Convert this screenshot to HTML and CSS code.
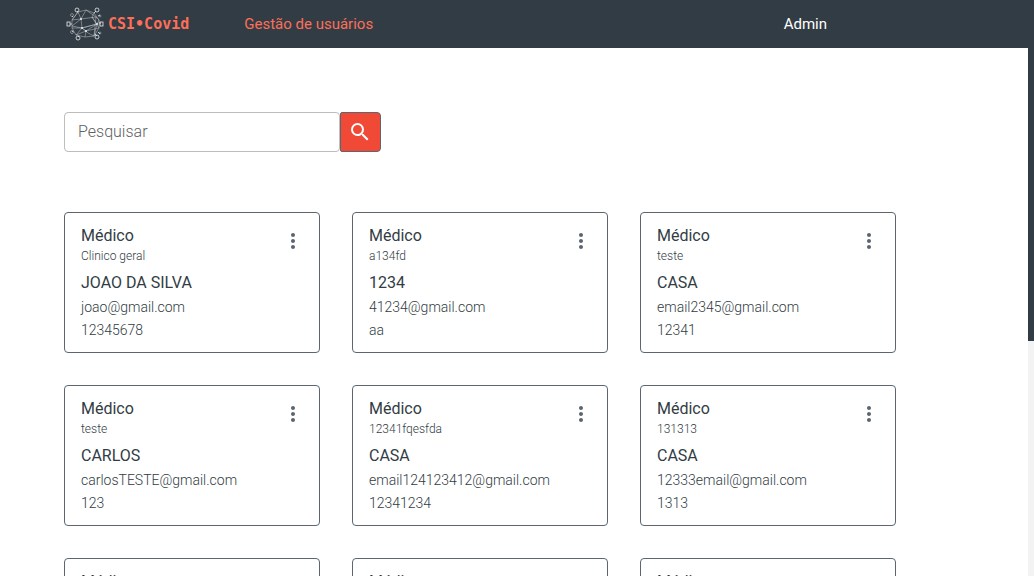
FILE: index.html
```html
<!DOCTYPE html>
<html lang="pt-BR">
<head>
<meta charset="utf-8">
<meta name="viewport" content="width=device-width, initial-scale=1">
<title>CSI•Covid</title>
<link rel="stylesheet" href="styles.css">
</head>
<body>
<svg class="defs" aria-hidden="true">
  <symbol id="more" viewBox="0 0 24 24"><path d="M12 8c1.100 0 2-.9 2-2s-.9-2-2-2-2 .9-2 2 .9 2 2 2zm0 2c-1.100 0-2 .9-2 2s.9 2 2 2 2-.9 2-2-.9-2-2-2zm0 6c-1.100 0-2 .9-2 2s.9 2 2 2 2-.9 2-2-.9-2-2-2z"/></symbol>
</svg>
<header class="topbar">
  <a class="brand" href="#">
    <svg class="brand-mark" viewBox="0 0 38 36" aria-hidden="true">
      <g class="mesh">
        <path d="M12 6 20 4 28 7 33 14 33 22 28 30 19 31 10 29 6 22 6 14Z"/>
        <path d="M12 6 15 13 30 11 20 4 15 13 6 20 16 22 31 18 26 11 28 7M6 14 15 13 16 22 10 29 20 25 33 22 26 11M16 22 22 27 28 30 31 18 20 25 19 31M20 25 16 22 31 18 33 14 30 11 28 30M6 22 16 22M12 6 6 14"/>
      </g>
      <g class="spikes">
        <path d="M12 6 11 5M28 7 30 5M33 17H35M29 28 31 30M13 30 12 31M6 18H4M7 11 6 10M7 25 6 26M32 26 34 28M32 10 34 9"/>
        <circle cx="11" cy="4" r="2"/><circle cx="31" cy="4" r="2"/><rect x="34" y="16" width="3" height="4"/><circle cx="31" cy="31" r="2"/><circle cx="12" cy="32" r="2"/><rect x="1" y="16" width="3" height="4"/>
      </g>
      <g class="buds">
        <circle cx="6" cy="9" r="1.500"/><circle cx="6" cy="26" r="1.500"/><circle cx="34" cy="10" r="1"/><circle cx="34" cy="27" r="1"/>
      </g>
      <g class="nodes"><circle cx="15" cy="13" r="1"/><circle cx="16" cy="22" r="1"/><circle cx="31" cy="18" r="1"/><circle cx="20" cy="25" r="1"/></g>
    </svg>
    <span class="brand-name">CSI•Covid</span>
  </a>
  <nav class="nav"><a class="nav-link" href="#">Gestão de usuários</a></nav>
  <a class="account" href="#">Admin</a>
</header>
<main class="content">
  <form class="search" role="search">
    <input class="search-input" type="text" placeholder="Pesquisar" aria-label="Pesquisar">
    <button class="search-button" type="button" aria-label="Pesquisar">
      <svg class="icon" viewBox="0 0 24 24" aria-hidden="true"><path d="M15.500 14h-.79l-.28-.27A6.471 6.471 0 0 0 16 9.500 6.500 6.500 0 1 0 9.500 16c1.610 0 3.090-.59 4.230-1.570l.27.28v.79l5 4.990L20.490 19l-4.990-5zm-6 0C7.010 14 5 11.990 5 9.500S7.010 5 9.500 5 14 7.010 14 9.500 11.990 14 9.500 14z"/></svg>
    </button>
  </form>
  <section class="cards">
    <article class="card">
      <div class="card-head"><div><h2 class="title">Médico</h2><p class="role">Clinico geral</p></div><button class="menu" type="button" aria-label="Opções"><svg class="icon"><use href="#more"/></svg></button></div>
      <h3 class="name">JOAO DA SILVA</h3><p class="detail">joao@gmail.com</p><p class="detail">12345678</p>
    </article>
    <article class="card">
      <div class="card-head"><div><h2 class="title">Médico</h2><p class="role">a134fd</p></div><button class="menu" type="button" aria-label="Opções"><svg class="icon"><use href="#more"/></svg></button></div>
      <h3 class="name">1234</h3><p class="detail">41234@gmail.com</p><p class="detail">aa</p>
    </article>
    <article class="card">
      <div class="card-head"><div><h2 class="title">Médico</h2><p class="role">teste</p></div><button class="menu" type="button" aria-label="Opções"><svg class="icon"><use href="#more"/></svg></button></div>
      <h3 class="name">CASA</h3><p class="detail">email2345@gmail.com</p><p class="detail">12341</p>
    </article>
    <article class="card">
      <div class="card-head"><div><h2 class="title">Médico</h2><p class="role">teste</p></div><button class="menu" type="button" aria-label="Opções"><svg class="icon"><use href="#more"/></svg></button></div>
      <h3 class="name">CARLOS</h3><p class="detail">carlosTESTE@gmail.com</p><p class="detail">123</p>
    </article>
    <article class="card">
      <div class="card-head"><div><h2 class="title">Médico</h2><p class="role">12341fqesfda</p></div><button class="menu" type="button" aria-label="Opções"><svg class="icon"><use href="#more"/></svg></button></div>
      <h3 class="name">CASA</h3><p class="detail">email124123412@gmail.com</p><p class="detail">12341234</p>
    </article>
    <article class="card">
      <div class="card-head"><div><h2 class="title">Médico</h2><p class="role">131313</p></div><button class="menu" type="button" aria-label="Opções"><svg class="icon"><use href="#more"/></svg></button></div>
      <h3 class="name">CASA</h3><p class="detail">12333email@gmail.com</p><p class="detail">1313</p>
    </article>
    <article class="card"><h2 class="title">Médico</h2></article>
    <article class="card"><h2 class="title">Médico</h2></article>
    <article class="card"><h2 class="title">Médico</h2></article>
  </section>
</main>
<div class="scrollbar" aria-hidden="true"><div class="scrollbar-thumb"></div></div>
</body>
</html>
```
FILE: styles.css
```css
* { box-sizing: border-box; margin: 0; padding: 0; }
body {
  height: 100vh;
  overflow: hidden;
  background: #fff;
  color: #323c44;
  font: 400 16px/24px Roboto, "Liberation Sans", sans-serif;
}
.defs { display: none; }
.topbar {
  display: flex;
  align-items: center;
  height: 48px;
  padding-left: 66px;
  padding-right: 207px;
  background: #323c44;
}
.topbar a { text-decoration: none; }
.brand { display: flex; align-items: center; gap: 4px; color: #fd6f59; }
.brand-mark { width: 38px; height: 36px; fill: none; stroke: #e8ebed; }
.mesh { stroke-width: .5; opacity: .8; }
.spikes { stroke-width: .8; }
.buds { stroke-width: .6; opacity: .7; }
.nodes { fill: #e8ebed; stroke: none; }
.brand-name { font: 700 15px/24px "DejaVu Sans Mono", monospace; }
.nav { margin-left: 55px; font-size: 15px; }
.nav-link { color: #fd6f59; }
.account { margin-left: auto; color: #fff; font-size: 15px; }
.content { padding: 64px 138px 0 64px; }
.search { display: flex; width: 317px; height: 40px; }
.search-input {
  flex: 1;
  min-width: 0;
  padding: 0 13px;
  border: 1px solid #bdbdbd;
  border-radius: 4px;
  background: #fff;
  color: #323c44;
  font: 300 16px/24px Roboto, sans-serif;
}
.search-input::placeholder { color: #616161; opacity: 1; }
.search-button {
  display: grid;
  place-items: center start;
  width: 41px;
  padding-left: 7px;
  border: 1px solid #5b6670;
  border-radius: 2px 4px 4px 2px;
  background: #f04936;
}
.icon { display: block; width: 24px; height: 24px; fill: currentColor; }
.search-button .icon { color: #fff; }
.cards {
  display: grid;
  grid-template-columns: repeat(3, 1fr);
  gap: 32px;
  margin-top: 60px;
}
.card {
  padding: 11px 16px 9px;
  min-height: 141px;
  border: 1px solid #5b6670;
  border-radius: 4px;
}
.card-head { display: flex; justify-content: space-between; align-items: center; margin-bottom: 7px; }
.title, .name { font-size: 16px; line-height: 24px; font-weight: 400; }
.name { margin-bottom: 1px; }
.role { font-size: 12px; line-height: 16px; font-weight: 300; }
.detail { font-size: 14px; line-height: 23px; font-weight: 300; }
.menu { border: 0; background: none; color: #5b6670; }
.card-head .menu { margin-right: -2px; margin-top: -6px; }
.scrollbar { position: fixed; top: 0; right: 0; width: 6px; height: 100%; background: #f3f3f3; }
.scrollbar-thumb { height: 59.200%; background: #323c44; }
```
